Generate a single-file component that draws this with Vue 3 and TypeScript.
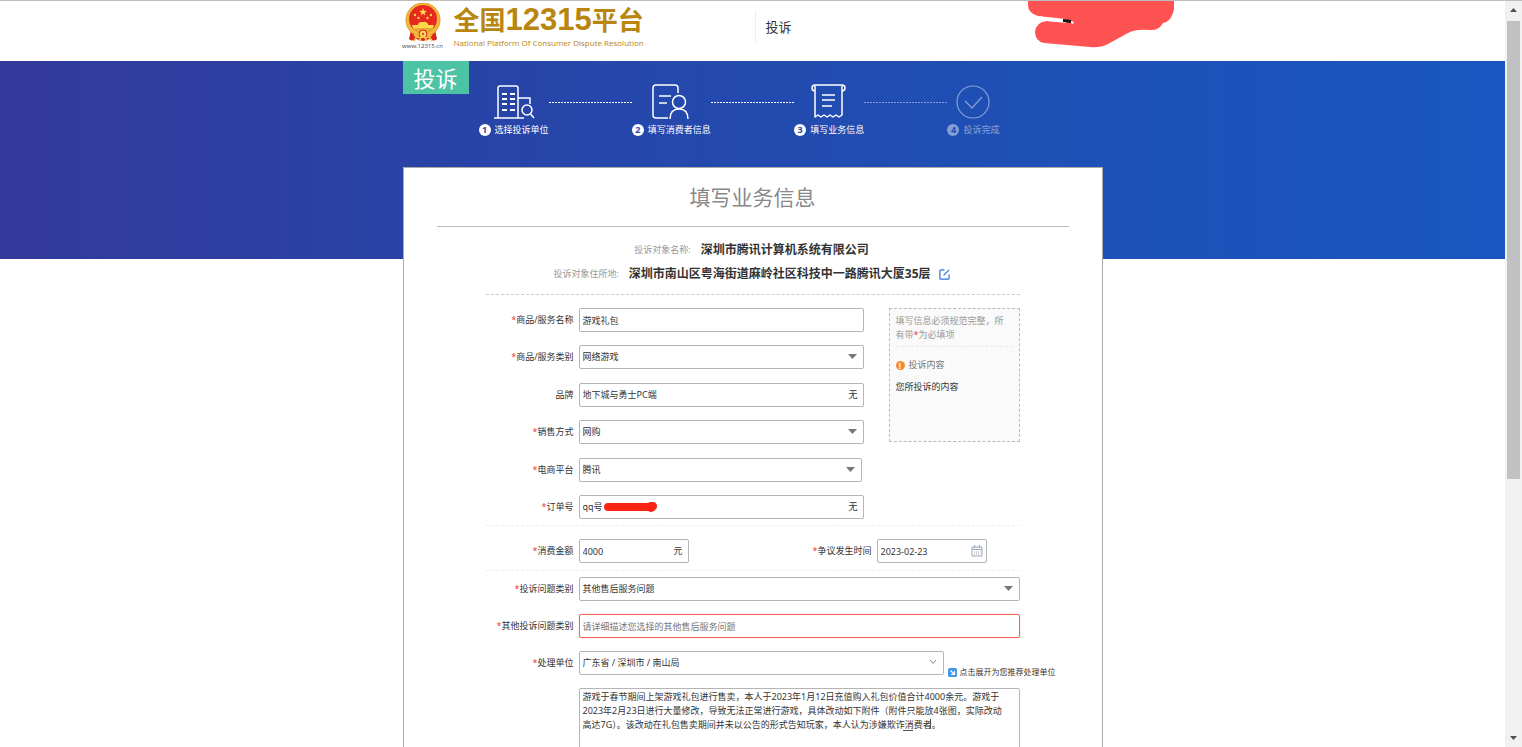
<script setup lang="ts">
import { ref } from 'vue'

interface Field {
  id: string
  label: string
  required: boolean
  kind: 'text' | 'select'
  value: string
  none?: boolean
  masked?: boolean
  narrow?: boolean
}

const fields = ref<Field[]>([
  { id: 'goods-name', label: '商品/服务名称', required: true, kind: 'text', value: '游戏礼包' },
  { id: 'goods-type', label: '商品/服务类别', required: true, kind: 'select', value: '网络游戏' },
  { id: 'brand', label: '品牌', required: false, kind: 'text', value: '地下城与勇士PC端', none: true },
  { id: 'sale-mode', label: '销售方式', required: true, kind: 'select', value: '网购' },
  { id: 'platform', label: '电商平台', required: true, kind: 'select', value: '腾讯', narrow: true },
  { id: 'order', label: '订单号', required: true, kind: 'text', value: 'qq号', none: true, masked: true },
])

const steps = [
  { no: 1, name: '选择投诉单位', done: true },
  { no: 2, name: '填写消费者信息', done: true },
  { no: 3, name: '填写业务信息', done: true },
  { no: 4, name: '投诉完成', done: false },
]

const amount = ref('4000')
const date = ref('2023-02-23')
const problem = ref('其他售后服务问题')
const otherProblem = ref('')
const unit = ref('广东省 / 深圳市 / 南山局')
const detail = ref(
  '游戏于春节期间上架游戏礼包进行售卖，本人于2023年1月12日充值购入礼包价值合计4000余元。游戏于\n' +
    '2023年2月23日进行大量修改，导致无法正常进行游戏，具体改动如下附件（附件只能放4张图，实际改动\n' +
    '高达7G）。该改动在礼包售卖期间并未以公告的形式告知玩家，本人认为涉嫌欺诈消费者。',
)
</script>

<template>
  <div class="window">
    <div class="page">
      <header class="header">
        <div class="wrap header-row">
          <div class="emblem">
            <svg width="38" height="39" viewBox="0 0 38 39" aria-hidden="true">
              <path d="M7 27 L31 27 L33 36 Q30 39 26 36 L19 38 L12 36 Q8 39 5 36 Z" fill="#d9241c" />
              <circle cx="19" cy="17" r="17" fill="#f3b93c" />
              <circle cx="19" cy="17" r="17" fill="none" stroke="#e39a2b" stroke-width="1" />
              <circle cx="19" cy="16" r="14" fill="#e62a1f" />
              <path d="M19 5 L20 7.800 L23 7.900 L20.600 9.700 L21.500 12.500 L19 10.800 L16.500 12.500 L17.400 9.700 L15 7.900 L18 7.800 Z" fill="#fbd94a" />
              <g fill="#fbd94a">
                <circle cx="11" cy="12" r="1.200" /><circle cx="27" cy="12" r="1.200" />
                <circle cx="14.500" cy="15" r="1.200" /><circle cx="23.500" cy="15" r="1.200" />
                <path d="M14 21 L16 19 H22 L24 21 V22 H30 L29 25 H9 L8 22 H14 Z" />
              </g>
              <path d="M8 25 H30 Q27 30 19 30 Q11 30 8 25" fill="#e8a733" />
              <circle cx="19" cy="31" r="4" fill="#f8d25a" stroke="#d9241c" stroke-width="1" />
              <circle cx="19" cy="31" r="1" fill="#d9241c" />
              <path d="M10 32 Q15 36 19 34 Q23 36 28 32 M13 33 L10 38 M25 33 L28 38 M17 35 L15 38 M21 35 L23 38" fill="none" stroke="#f5c747" stroke-width="1.500" />
            </svg>
            <span class="site">www.12315.cn</span>
          </div>
          <div class="brand">
            <div class="brand-name">全国<b>12315</b>平台</div>
            <div class="brand-sub">National Platform Of Consumer Dispute Resolution</div>
          </div>
          <div class="channel">投诉</div>
          <svg class="account-mask" width="146" height="48" viewBox="0 0 146 48" aria-hidden="true">
            <path d="M0 0 H146 Q147 6 145 12 Q142 21 135 22 Q131 30 121 29 Q108 28 100 32 L80 43 Q72 47 62 46 L16 42 Q7 40 7 31 Q8 21 19 20 L38 22 L38 20 L10 15 Q0 12 0 4 Z" fill="#ff5252" />
            <path d="M10 15 L37 18 L36 21 L19 20 Z" fill="#fff" />
            <path d="M35 18 L43 19 L44 22 L35 21 Z" fill="#111" />
            <path d="M43 20 L46 21 L45 23 L43 22 Z" fill="#fff" />
          </svg>
        </div>
      </header>

      <section class="banner">
        <div class="wrap">
          <h1 class="tag">投诉</h1>
          <ol class="steps">
            <template v-for="s in steps" :key="s.no">
              <li v-if="s.no > 1" class="line" :class="{ faded: !s.done }" aria-hidden="true"></li>
              <li class="step" :class="{ faded: !s.done }">
                <svg width="42" height="36" viewBox="0 0 42 36" fill="none" stroke="#fff" stroke-width="1.500" stroke-linejoin="round" aria-hidden="true">
                  <g v-if="s.no === 1">
                    <path d="M1 34 H31 M5 34 V4 Q5 2 7 2 H23 Q25 2 25 4 V34 M25 14 H37 V20" />
                    <path d="M9 10 H14 M17 10 H22 M9 15 H14 M17 15 H22 M9 20 H14 M17 20 H22 M9 26 H14 M17 26 H22" stroke-width="2" />
                    <circle cx="34" cy="26" r="5" /><path d="M37.500 30 L41 34" />
                  </g>
                  <g v-else-if="s.no === 2">
                    <path d="M18 34 H6 Q3 34 3 31 V4 Q3 1 6 1 H25 Q28 1 28 4 V9 M9 12 H21 M9 19 H17" />
                    <circle cx="29" cy="18" r="6.500" /><path d="M20 35 Q20 25 29 25 Q38 25 38 35" />
                  </g>
                  <g v-else-if="s.no === 3">
                    <path d="M7 7 Q4 7 4 4 Q4 1 7 1 H34 Q37 1 37 4 Q37 7 34 7 M7 2 V33 L10 31 L13 33 L16 31 L19 33 L22 31 L25 33 L28 31 L31 33 L34 31 V2" />
                    <path d="M14 11 H27 M14 16 H27 M14 22 H24" />
                  </g>
                  <g v-else>
                    <circle cx="21" cy="18" r="16" stroke-width="1.200" /><path d="M13 17 L20 24 L30 13" stroke-width="1.200" />
                  </g>
                </svg>
                <span class="step-name"><i>{{ s.no }}</i>{{ s.name }}</span>
              </li>
            </template>
          </ol>
        </div>
      </section>

      <main class="wrap card">
        <h2>填写业务信息</h2>
        <dl class="target">
          <div><dt>投诉对象名称:</dt><dd>深圳市腾讯计算机系统有限公司</dd></div>
          <div>
            <dt>投诉对象住所地:</dt><dd>深圳市南山区粤海街道麻岭社区科技中一路腾讯大厦35层</dd>
            <button type="button" class="edit" aria-label="修改">
              <svg width="11" height="11" viewBox="0 0 12 12" fill="none" stroke="#2f6fe0" stroke-width="1.300"><path d="M6 1 H2 Q1 1 1 2 V10 Q1 11 2 11 H10 Q11 11 11 10 V6 M5 7 L11 1" /></svg>
            </button>
          </div>
        </dl>

        <form class="form" @submit.prevent>
          <div class="basic">
            <div class="rows">
              <div v-for="f in fields" :key="f.id" class="row">
                <label :for="f.id"><em v-if="f.required">*</em>{{ f.label }}</label>
                <div class="control" :class="{ narrow: f.narrow }">
                  <select v-if="f.kind === 'select'" :id="f.id" v-model="f.value"><option>{{ f.value }}</option></select>
                  <input v-else :id="f.id" v-model="f.value" type="text" />
                  <svg v-if="f.kind === 'select'" class="arrow" width="9" height="5" viewBox="0 0 9 5"><path d="M0 0 H9 L4.500 5 Z" fill="#777" /></svg>
                  <button v-if="f.none" type="button" class="suffix">无</button>
                  <svg v-if="f.masked" class="order-mask" width="56" height="12" viewBox="0 0 56 12"><path d="M4 6 H46 L49 5" fill="none" stroke="#fb2414" stroke-width="8" stroke-linecap="round" /><circle cx="47" cy="6" r="5" fill="#fb2414" /></svg>
                </div>
              </div>
            </div>
            <aside class="tips">
              <p class="notice">填写信息必须规范完整，所有带<em>*</em>为必填项</p>
              <h3><i>!</i>投诉内容</h3>
              <p class="hint">您所投诉的内容</p>
            </aside>
          </div>

          <div class="row money">
            <label for="amount"><em>*</em>消费金额</label>
            <div class="control small">
              <input id="amount" v-model="amount" type="text" /><span class="suffix">元</span>
            </div>
            <label for="date" class="date-label"><em>*</em>争议发生时间</label>
            <div class="control small">
              <input id="date" v-model="date" type="text" />
              <button type="button" class="calendar" aria-label="选择日期">
                <svg width="12" height="12" viewBox="0 0 12 12" fill="none" stroke="#9aa6b2"><path d="M1 2 H11 V11 H1 Z M1 4.500 H11 M3.500 0 V3 M8.500 0 V3" /><path d="M3 7 H9.500 M3 9 H9.500" stroke-dasharray="1 1" /></svg>
              </button>
            </div>
          </div>

          <div class="rows more">
            <div class="row">
              <label for="problem"><em>*</em>投诉问题类别</label>
              <div class="control">
                <select id="problem" v-model="problem"><option>{{ problem }}</option></select>
                <svg class="arrow" width="9" height="5" viewBox="0 0 9 5"><path d="M0 0 H9 L4.500 5 Z" fill="#777" /></svg>
              </div>
            </div>
            <div class="row">
              <label for="other"><em>*</em>其他投诉问题类别</label>
              <div class="control error"><input id="other" v-model="otherProblem" type="text" placeholder="请详细描述您选择的其他售后服务问题" /></div>
            </div>
            <div class="row unit">
              <label for="unit"><em>*</em>处理单位</label>
              <div class="control">
                <select id="unit" v-model="unit"><option>{{ unit }}</option></select>
                <svg class="arrow" width="8" height="5" viewBox="0 0 8 5"><path d="M1 0 L4 3.500 L7 0" fill="none" stroke="#888" /></svg>
              </div>
              <a href="#" class="recommend">
                <svg width="9" height="9" viewBox="0 0 9 9"><rect width="9" height="9" rx="1.500" fill="#3f97e8" /><path d="M2.500 2.500 L6 6 M6.500 3 V6.500 H3" fill="none" stroke="#fff" stroke-width="1.200" /></svg>
                点击展开为您推荐处理单位
              </a>
            </div>
            <div class="row text-row">
              <textarea v-model="detail" aria-label="投诉内容" spellcheck="false"></textarea>
              <svg class="caret" width="30" height="14" viewBox="0 0 30 14" fill="none" stroke="#555" aria-hidden="true"><path d="M0 12.500 H10 M27.500 1 V11" /></svg>
            </div>
          </div>
        </form>
      </main>
    </div>

    <div class="scrollbar" aria-hidden="true">
      <svg width="17" height="20" viewBox="0 0 17 20"><path d="M5 11 L8.500 7 L12 11 Z" fill="#505050" /></svg>
      <div class="track"><div class="thumb"></div></div>
      <svg width="17" height="17" viewBox="0 0 17 17"><path d="M5 6 L8.500 10 L12 6 Z" fill="#505050" /></svg>
    </div>
  </div>
</template>

<style>
body { margin: 0; }
</style>

<style scoped>
.window {
  display: flex;
  height: 100vh;
  overflow: hidden;
  box-sizing: border-box;
  border-top: 1px solid #bdbdbd;
  background: #fff;
  color: #333;
  font: 9px/14px "Noto Sans", "Noto Sans CJK SC", sans-serif;
}
.window *, .window *::before { box-sizing: border-box; }
.page { flex: 1; min-width: 0; overflow: hidden; }
.wrap { width: 700px; max-width: 100%; margin: 0 auto; }
input, select, textarea, button { font: inherit; color: inherit; }
button { padding: 0; border: 0; background: none; }
h1, h2, h3, p, dl, dd, ol { margin: 0; padding: 0; font-weight: normal; }
em { color: #f03b45; font-style: normal; }

.header { height: 60px; }
.header-row { position: relative; display: flex; height: 100%; }
.emblem { display: flex; flex-direction: column; align-items: center; width: 40px; padding-top: 2px; }
.site { color: #555; font-size: 6px; line-height: 8px; }
.brand { width: 301px; margin-left: 11px; color: #b8860f; white-space: nowrap; }
.brand-name { font-family: "Noto Sans CJK SC", sans-serif; font-size: 26px; font-weight: 700; line-height: 36px; }
.brand-name b { font-family: "Liberation Sans", sans-serif; font-size: 31px; line-height: 36px; }
.brand-sub { font-family: "Open Sans", sans-serif; font-size: 8px; line-height: 10px; }
.channel { align-self: flex-start; margin-top: 9px; padding-left: 10px; border-left: 1px solid #eee; font-size: 13px; line-height: 34px; }
.account-mask { position: absolute; top: 0; right: -71px; }

.banner { height: 198px; background: linear-gradient(90deg, #333a9b, #2745a9 35%, #1f4fb4 65%, #1957c0); color: #fff; }
.tag { width: 66px; height: 33px; background: #4dc3a5; font-size: 22px; line-height: 34px; text-align: center; }
.steps { display: flex; width: 521px; margin-left: 76px; margin-top: -10px; list-style: none; }
.step { display: flex; flex-direction: column; align-items: center; gap: 3px; }
.step-name { display: flex; align-items: center; gap: 4px; line-height: 14px; white-space: nowrap; }
.step-name i { width: 12px; height: 12px; border-radius: 50%; background: #fff; color: #2847aa; font-size: 9px; font-style: normal; font-weight: 700; line-height: 12px; text-align: center; }
.line { flex: 1; height: 1px; margin-top: 18px; background: repeating-linear-gradient(90deg, #fff 0 2px, transparent 2px 3px); }
.faded { opacity: 0.45; }

.card { position: relative; min-height: 700px; margin-top: -92px; padding: 0 33px; border: 1px solid #aaa; background: #fff; }
.card h2 { border-bottom: 1px solid #bbb; color: #888; font-size: 21px; line-height: 58px; text-align: center; }
.target { margin-top: 11px; padding-right: 2px; line-height: 24px; }
.target div { display: flex; justify-content: center; align-items: center; height: 24px; }
.target dt { margin-right: 10px; color: #999; }
.target dd { font-size: 12px; font-weight: 700; color: #333; }
.edit { display: flex; margin-left: 8px; }

.form { width: 534px; margin: 8px auto 0; border-top: 1px dashed #ccc; }
.basic { display: flex; justify-content: space-between; align-items: flex-start; padding: 13px 0 6px; border-bottom: 1px dashed #eee; }
.rows { display: flex; flex-direction: column; justify-content: space-between; }
.basic .rows { width: 378px; min-height: 211px; }
.row { display: flex; align-items: center; gap: 5px; }
.row label { flex: none; width: 88px; text-align: right; white-space: nowrap; }
.control { position: relative; display: flex; flex: 1; align-items: center; height: 24px; border: 1px solid #b5b5b5; border-radius: 2px; }
.control.narrow { margin-right: 2px; }
.control.error { border-color: #f4645f; box-shadow: 0 0 1px #f4645f; }
.control input, .control select { flex: 1; min-width: 0; width: 100%; height: 22px; padding: 0 3px; border: 0; outline: 0; background: transparent; appearance: none; }
.control input::placeholder { color: #777; opacity: 1; }
.arrow { position: absolute; right: 6px; top: 8px; }
.suffix { flex: none; padding-right: 5px; }
.order-mask { position: absolute; left: 24px; top: 5px; }

.tips { width: 131px; height: 134px; padding: 5px 6px; border: 1px dashed #bbb; background: #fafafa; }
.notice { padding: 0 4px 4px 0; border-bottom: 1px dashed #e8e8e8; color: #999; }
.tips h3 { display: flex; align-items: center; gap: 4px; margin-top: 11px; color: #777; font-size: 9px; }
.tips h3 i { width: 9px; height: 9px; border-radius: 50%; background: #f58a35; color: #fff; font-size: 8px; font-style: normal; font-weight: 700; line-height: 9px; text-align: center; }
.hint { margin-top: 8px; }

.money { padding: 13px 0 7px; border-bottom: 1px dashed #eee; }
.control.small { flex: none; width: 110px; }
.row .date-label { width: 178px; }
.calendar { display: flex; margin-right: 3px; }

.more { padding-top: 6px; gap: 13px; }
.unit .control { flex: none; width: 365px; }
.recommend { display: flex; flex: none; align-self: flex-end; align-items: center; gap: 3px; margin-right: -40px; margin-bottom: -4px; margin-left: -1px; color: #333; font-size: 8px; text-decoration: none; white-space: nowrap; }
.text-row { position: relative; }
.text-row textarea { flex: 1; height: 120px; margin-left: 93px; padding: 1px 3px; border: 1px solid #b5b5b5; border-radius: 2px; outline: 0; resize: none; line-height: 14px; white-space: pre; overflow: hidden; }
.caret { position: absolute; left: 417px; top: 30px; }

.scrollbar { display: flex; flex: none; flex-direction: column; width: 17px; background: #f1f1f1; }
.track { display: flex; flex: 1; flex-direction: column; padding: 0 2px; }
.track::after { content: ""; flex: 251; }
.thumb { flex: 458; background: #c1c1c1; }
</style>
